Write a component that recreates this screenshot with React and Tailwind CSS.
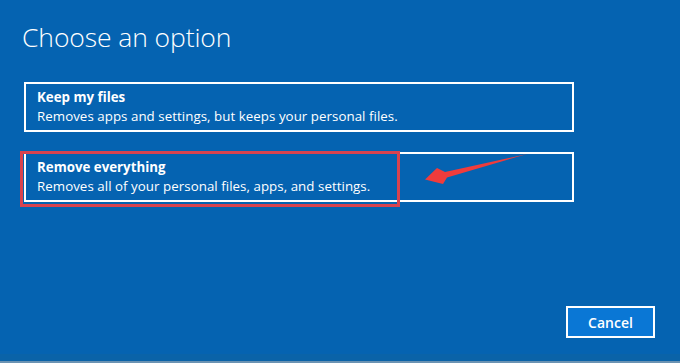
export default function App() {
  const options = [
    {
      title: "Keep my files",
      description: "Removes apps and settings, but keeps your personal files.",
    },
    {
      title: "Remove everything",
      description: "Removes all of your personal files, apps, and settings.",
    },
  ];

  return (
    <div
      className="relative w-[680px] h-[363px] overflow-hidden bg-[#0563b1] text-white flex flex-col"
      style={{ fontFamily: '"Open Sans", "Noto Sans", sans-serif' }}
    >
      <h1 className="ml-[22px] mt-[19px] text-[26.5px] leading-[36px] font-light tracking-[-0.1px]">
        Choose an option
      </h1>

      <div className="ml-[24px] mt-[27px] flex flex-col gap-[20px]">
        {options.map((option) => (
          <div
            key={option.title}
            className="w-[550px] border-2 border-white px-[11px] py-[4px] text-[13.3px] leading-[19px]"
          >
            <div className="font-bold">{option.title}</div>
            <div className="tracking-[0.05px]">{option.description}</div>
          </div>
        ))}
      </div>

      <div className="mt-auto mb-[25px] mr-[25px] self-end">
        <button className="w-[89px] h-[32px] border-2 border-white bg-[#0a77d5] text-[14px] font-semibold">
          Cancel
        </button>
      </div>

      <div className="absolute left-0 right-0 bottom-0 h-[9px] bg-[#0a63a8]" />
      <div className="absolute left-0 right-0 bottom-0 h-[2px] bg-[#6b93b3]" />

      {/* annotation: red highlight box */}
      <div className="absolute left-[20px] top-[151px] w-[380px] h-[56px] border-[3px] border-[#d8434f]" />

      {/* annotation: red arrow */}
      <svg
        className="absolute left-0 top-0"
        width="680"
        height="363"
        viewBox="0 0 680 363"
      >
        <polygon
          points="425,179.5 437,168 445,172 527,154 447,177.5 443,184"
          fill="#f03c3c"
        />
      </svg>
    </div>
  );
}
